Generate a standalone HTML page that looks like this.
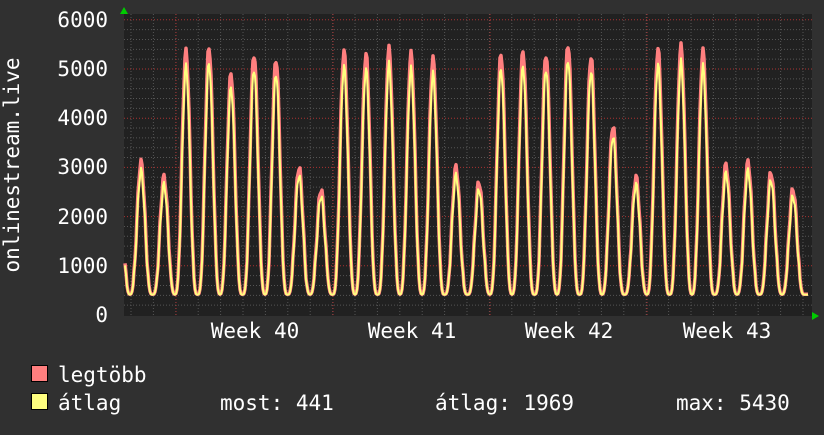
<!DOCTYPE html><html><head><style>
body{margin:0;background:#303030;width:824px;height:430px;overflow:hidden}
svg text{font-family:"DejaVu Sans Mono","Liberation Mono",monospace;fill:#fff;font-size:21px}
</style></head><body>
<svg id="s" width="824" height="430" xmlns="http://www.w3.org/2000/svg">
<rect x="0" y="0" width="824" height="430" fill="#303030"/>
<rect x="124" y="14" width="688" height="302" fill="#212121"/>
<g id="grid"></g>
<path id="pk" fill="none" stroke="#ff7f7f" stroke-width="3.5" stroke-linejoin="round"/>
<path id="av" fill="none" stroke="#ffff7f" stroke-width="2" stroke-linejoin="round"/>
<polygon points="120,14 128,14 124,7" fill="#0c0"/>
<polygon points="812,312 812,320 819,316" fill="#0c0"/>
<g text-anchor="end">
<text x="108" y="27">6000</text><text x="108" y="76">5000</text><text x="108" y="125">4000</text>
<text x="108" y="174">3000</text><text x="108" y="224">2000</text><text x="108" y="273">1000</text>
<text x="108" y="322">0</text></g>
<g text-anchor="middle">
<text x="255" y="338">Week 40</text><text x="412" y="338">Week 41</text>
<text x="569" y="338">Week 42</text><text x="727" y="338">Week 43</text></g>
<text transform="translate(19,165) rotate(-90)" text-anchor="middle">onlinestream.live</text>
<rect x="31.5" y="365.5" width="16" height="16" fill="#ff7f7f" stroke="#000"/>
<rect x="31.5" y="393.5" width="16" height="16" fill="#ffff7f" stroke="#000"/>
<text x="58" y="382">legtöbb</text>
<text x="58" y="410">átlag</text>
<text x="220" y="410">most: 441</text>
<text x="435" y="410">átlag: 1969</text>
<text x="676" y="410">max: 5430</text>
</svg>
<script>
var g=document.getElementById('grid'),h='';
function Y(v){return 315-v*0.0492;}
for(var v=200;v<6000;v+=200){if(v%1000)h+='<line x1="124" x2="812" y1="'+Y(v)+'" y2="'+Y(v)+'" stroke="#555" stroke-dasharray="1,2"/>';}
for(var x=131;x<812;x+=22.4)h+='<line y1="14" y2="316" x1="'+x+'" x2="'+x+'" stroke="#555" stroke-dasharray="1,2"/>';
for(var v=1000;v<=6000;v+=1000)h+='<line x1="124" x2="812" y1="'+Y(v)+'" y2="'+Y(v)+'" stroke="#a33" stroke-dasharray="1,2"/>';
[176,333,490,647].forEach(function(x){h+='<line y1="14" y2="316" x1="'+x+'" x2="'+x+'" stroke="#a33" stroke-dasharray="1,2"/>';});
g.innerHTML=h;
var P=[[119,3000],[141,3100],[164,2800],[186,5350],[209,5430],[231,4900],[254,5300],[276,5200],[299,3000],[321,2550],[344,5350],[366,5300],[389,5400],[411,5300],[433,5200],[456,3000],[479,2700],[501,5300],[523,5350],[546,5300],[568,5500],[591,5250],[613,3850],[636,2800],[658,5400],[681,5450],[703,5350],[726,3050],[748,3100],[771,2900],[793,2550]];
var a='',b='';
for(var x=125;x<=808;x+=1){var best=420;
P.forEach(function(p){var d=(x-p[0])/22.4;if(Math.abs(d)<0.5){var s=Math.pow((1+Math.cos(2*Math.PI*d))/2,1.6);var v=420+(p[1]-420)*s;if(v>best)best=v;}});
var n=Math.sin(x*1.7)*80;var m=best+(best>800?n:0);
a+=(x==125?'M':'L')+x+','+Y(m).toFixed(1);b+=(x==125?'M':'L')+x+','+Y(m*0.94+20).toFixed(1);}
document.getElementById('pk').setAttribute('d',a);document.getElementById('av').setAttribute('d',b);
</script>
</body></html>
